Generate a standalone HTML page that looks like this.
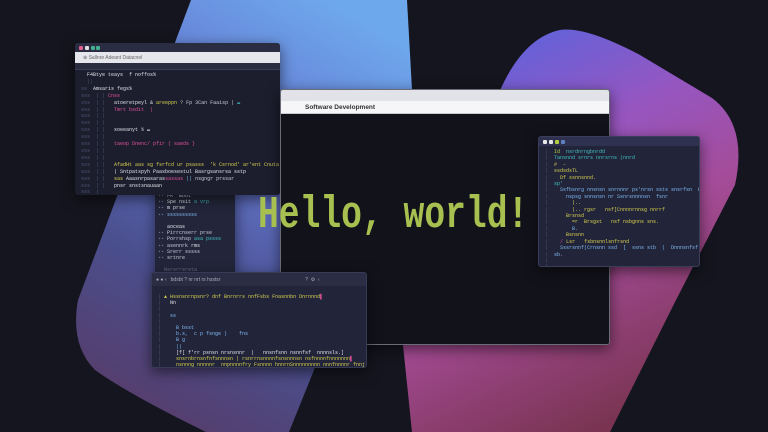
<!DOCTYPE html>
<html><head><meta charset="utf-8"><style>
*{margin:0;padding:0;box-sizing:border-box}
body{width:768px;height:432px;overflow:hidden;background:#15151f;position:relative;font-family:"Liberation Mono",monospace}
.w{position:absolute;border-radius:3px;overflow:hidden;box-shadow:0 4px 14px rgba(0,0,0,.55)}
.tb{height:9px;background:#2c2f44;position:relative}
.d{position:absolute;top:3px;width:4px;height:4px;border-radius:1px}
.code{font-size:5px;line-height:6.6px;white-space:pre;color:#c8cbd8;padding-left:6px}
.g{color:#b8d040}.p{color:#e0509a}.c{color:#40c0c0}.y{color:#d8d050}.m{color:#6a7090}.b{color:#80b8f0}.wt{color:#e0e0e8}
.ln{color:#4e5470}
</style></head><body>
<svg width="768" height="432" style="position:absolute;left:0;top:0">
<defs>
<linearGradient id="gl" x1="0.75" y1="0" x2="0.3" y2="1">
<stop offset="0" stop-color="#6ea8ec"/><stop offset="0.35" stop-color="#6478d0"/><stop offset="0.7" stop-color="#4a4f8e"/><stop offset="1" stop-color="#553d6c"/></linearGradient>
<linearGradient id="gr" x1="0.15" y1="0" x2="0.55" y2="1">
<stop offset="0" stop-color="#5366e2"/><stop offset="0.35" stop-color="#9656c0"/><stop offset="0.6" stop-color="#a54c98"/><stop offset="1" stop-color="#7a3452"/></linearGradient>
</defs>
<path d="M191,0 L407,0 L412,90 L314,370 L289,432 L206,432 Q130,395 95,370 Q70,345 78,300 Z" fill="url(#gl)"/>
<path d="M412,432 L403,345 L498,95 Q522,38 560,30 Q585,26 640,55 L712,98 Q748,125 735,185 L676,300 L610,432 Z" fill="url(#gr)"/>
</svg>

<!-- sidebar window -->
<div class="w" style="left:155px;top:188px;width:80px;height:86px;background:#23263a">
<div class="code" style="padding:5px 0 0 3px;line-height:6.2px"><span class="m">▪▪ </span>FR  <span class="wt">Boot</span>
<span class="m">▪▪ </span><span class="wt">Spe nsit</span> <span class="c">a vrp</span>
<span class="m">▪▪ </span><span class="wt">m prse</span>
<span class="m">▪▪ </span><span class="b">ssssssssss</span>

   <span class="wt">aoceas</span>
<span class="m">▪▪ </span>Pirrcnserr prse
<span class="m">▪▪ </span>Porrshsp <span class="c">asa pssss</span>
<span class="m">▪▪ </span>asennrk <span class="wt">rms</span>
<span class="m">▪▪ </span>Srerr sssss
<span class="m">▪▪ </span>srtnre

  <span class="m">Nsrsrrsreta</span>
<span class="c">▪▪</span> ssssssssss sisorn</div>
</div>

<!-- top-left editor -->
<div class="w" style="left:75px;top:43px;width:205px;height:152px;background:#1c1e2e">
<div class="tb" style="background:#2a2d42"><span class="d" style="left:4px;background:#e06090"></span><span class="d" style="left:10px;background:#e0e0e0"></span><span class="d" style="left:16px;background:#40b090"></span><span class="d" style="left:21px;background:#40b090"></span></div>
<div style="height:11px;background:#e6e7ec;font:5px 'Liberation Sans',sans-serif;color:#666;padding:3px 0 0 8px">⊕ Sallnre Adeant Datacnel</div>
<div style="height:7px;background:#2a2d40;border-bottom:1px solid #383c55"></div>
<div class="code" style="padding-top:2px;line-height:6.9px"><span class="wt">  F4Btye teays  f noffos%</span>
<span class="ln">  ||</span>
<span class="ln">ss </span> <span class="wt">Amsaris fegs%</span>
<span class="ln">sss  | |</span> <span class="p">Cnss</span>
<span class="ln">sss  | |</span>   <span class="wt">atoeretpeyl & </span><span class="y">areeppn</span> ? Fp 3Can Faaisp | <span class="c">▬</span>
<span class="ln">sss  | |</span>   <span class="p">Tmrt bsdit</span>  <span class="p">|</span>
<span class="ln">sss  | |</span>
<span class="ln">sss  | |</span>
<span class="ln">sss  | |</span>   <span class="wt">soeeanyt</span> % ▬
<span class="ln">sss  | |</span>
<span class="ln">sss  | |</span>   <span class="p">taeop Dnenc/ pfir ( saeds }</span>
<span class="ln">sss  | |</span>
<span class="ln">sss  | |</span>
<span class="ln">sss  | |</span>   <span class="y">AfadHt aas sg fsrfcd ur psasss  'k Csrnod' ar'ent Cnuta</span>
<span class="ln">sss  | |</span>   <span class="wt">| Sntpatspyh Paasboesestul Basrgsansrsa sstp</span>
<span class="ln">sss  | |</span>   <span class="y">sas </span><span class="wt">Aaasnrpasaras</span><span class="p">sassas</span> <span class="b">||</span> nsgngr prssar
<span class="ln">sss  | |</span>   <span class="wt">pnsr snstsnauaan</span>
<span class="ln">sss  |</span>
<span class="ln">sss  </span><span class="wt">aearpr  % sephal |</span> ▬</div>
</div>

<!-- main window -->
<div class="w" style="left:280px;top:89px;width:330px;height:256px;background:#12121a;border:1px solid #6a6c78">
<div style="height:11px;background:#e2e3e8"></div>
<div style="height:13px;background:#f6f6f8;border-bottom:1px solid #c8c8d0;font:bold 6.5px 'Liberation Sans',sans-serif;color:#333;padding:3px 0 0 24px">Software Development</div>
</div>
<div style="position:absolute;left:258px;top:186px;font-size:45px;font-weight:bold;color:#a7c050;white-space:pre;transform:scaleX(0.77);transform-origin:left top;line-height:60px">Hello, world!</div>

<!-- right editor -->
<div class="w" style="left:538px;top:136px;width:162px;height:131px;background:#22253a;border:1px solid #3a3e58">
<div class="tb" style="background:#2e3250"><span class="d" style="left:4px;background:#e8e8e8"></span><span class="d" style="left:10px;background:#e8e8e8"></span><span class="d" style="left:16px;background:#b0d040"></span><span class="d" style="left:22px;background:#6080c0"></span></div>
<div class="code" style="padding-top:3px;line-height:6.4px"><span class="ln">|</span>  <span class="g">Id  </span><span class="c">nsrdnrngbnrdd</span>
<span class="ln">|</span>  <span class="c">Tansnnd srnrs nnrsrns (nnrd</span>
<span class="ln">|</span>  <span class="y">#  -</span>
<span class="ln">|</span>  <span class="y">ssdsdsTL</span>
<span class="ln">|</span>    <span class="y">Df ssnnsnnd.</span>
<span class="ln">|</span>  <span class="c">sp'</span>
<span class="ln">|</span>    <span class="b">Ssfbsnrg nnsnsn snrnnnr ps'nrsn ssts snsrfsn  Bsnrn Dnsnfnsr )</span>
<span class="ln">|</span>      <span class="b">nspsg snnsnsn nr Ssnrsnnnnsn  fsnr</span>
<span class="ln">|</span>        <span class="y">|..</span>
<span class="ln">|</span>        <span class="y">|.. rgsr   nsf[Cnnnnrnnsg nnrrf</span>
<span class="ln">|</span>      <span class="y">Brsnsd</span>
<span class="ln">|</span>        <span class="y">=r  Brsgst   nsf nsbgnns sns.</span>
<span class="ln">|</span>        <span class="b">B.</span>
<span class="ln">|</span>      <span class="y">Bsnsnn</span>
<span class="ln">|</span>    <span class="p">/</span> <span class="y">Lsr   fsbnsnnlsnfrsnd</span>
<span class="ln">|</span>    <span class="b">Sssrsnnf(Crnsnn ssd  [  ssns stb  (  Dnnnsnfsf )</span>
<span class="ln">|</span>  <span class="b">sb.</span>
<span class="ln">|</span>
<span class="ln">|</span></div>
</div>

<!-- bottom editor -->
<div class="w" style="left:151px;top:272px;width:216px;height:96px;background:#22253a;border:1px solid #363a54">
<div style="height:13px;background:#2a2d44;font:5px 'Liberation Sans',sans-serif;color:#aab;padding:4px 0 0 4px;white-space:pre">● ● ‹   bdsbt ? nr nrt rs hsstsr                                                             ?  ⚙  ‹</div>
<div class="code" style="padding-top:8px;line-height:6.2px"><span class="ln">|</span> <span class="y">▲ </span><span class="y">Hssnsnrnpsnr? dnf Bnrnrrs nnfFsbs Fnasnnbn Dnrnnnd</span><span class="p">▌</span>
<span class="ln">|</span>   <span class="wt">Nn</span>
<span class="ln">|</span>
<span class="ln">|</span>   <span class="b">ss</span>
<span class="ln">|</span>
<span class="ln">|</span>     <span class="b">B bsst</span>
<span class="ln">|</span>     <span class="b">b.s,  c p fsnge )    fns</span>
<span class="ln">|</span>     <span class="b">B g</span>
<span class="ln">|</span>     <span class="b">||</span>
<span class="ln">|</span>     <span class="wt">[f[ f'rr psnsn nrsnsnnr  |   nnsnfsnn nsnnfsf  nnnnsls.]</span>
<span class="ln">|</span>     <span class="y">snsrnbrnsnfnfsnnnsn | rsnrrnsnnnnfsnsnnnsn nsfnnnnfnnnnnnn</span><span class="p">▌</span>
<span class="ln">|</span>     <span class="y">nsnnng nnnnnr  nnpnnnnfry Fsnnnn hnnrnSnnnnnnnnn nnnfnnnnr fnnj Bypnnnnnnnnn</span>
<span class="ln">|</span>     <span class="wt">a a</span></div>
</div>
</body></html>
